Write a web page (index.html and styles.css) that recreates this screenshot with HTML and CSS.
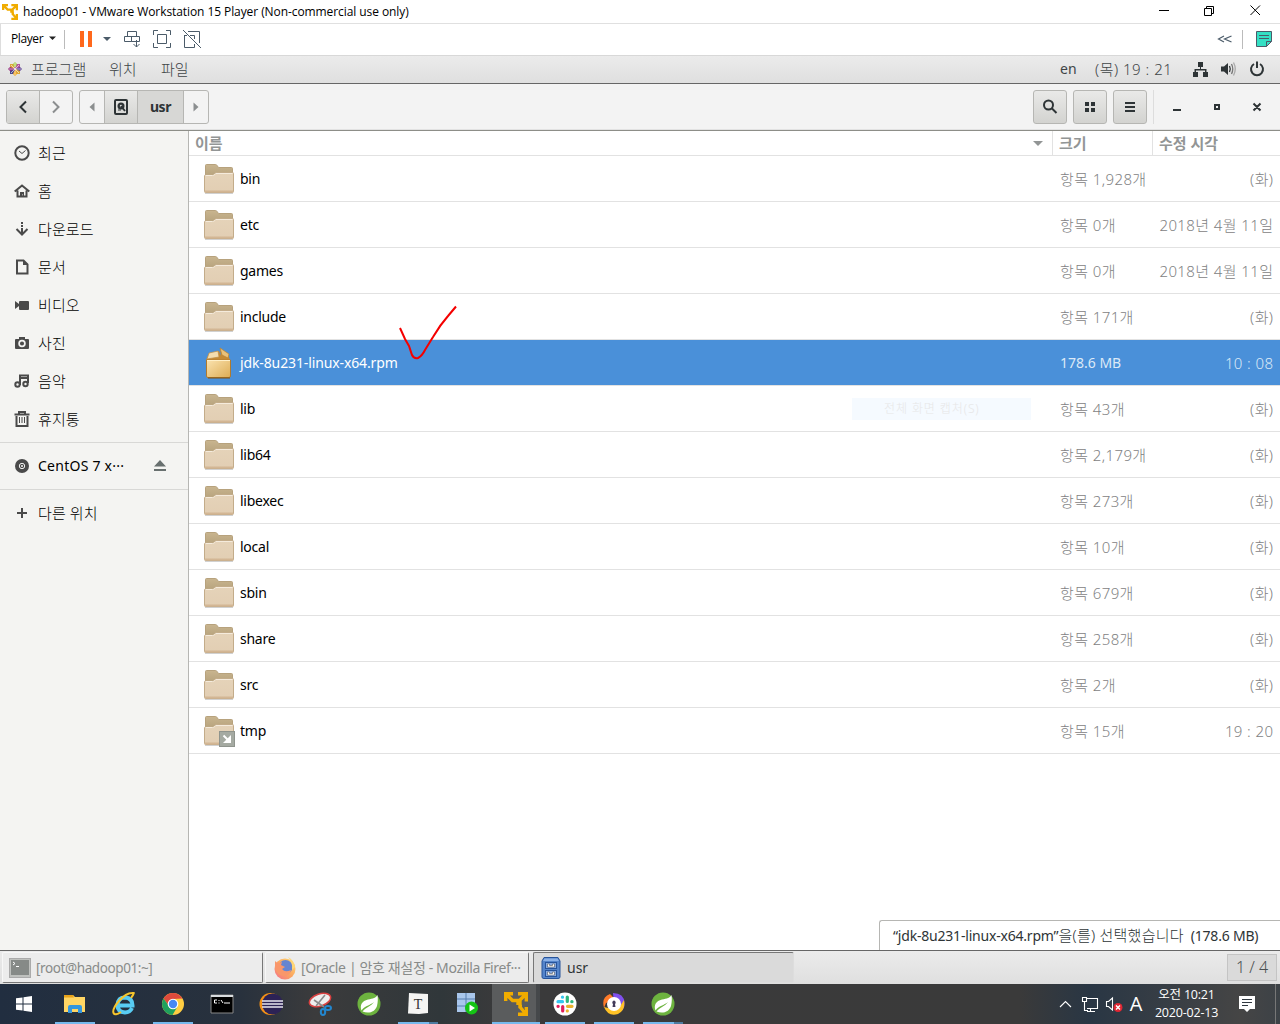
FILE: index.html
```html
<!DOCTYPE html>
<html lang="ko">
<head>
<meta charset="utf-8">
<title>hadoop01 - VMware Workstation 15 Player</title>
<link rel="stylesheet" href="styles.css">
</head>
<body>
<svg class="defs" aria-hidden="true">
  <defs>
    <linearGradient id="gBack" x1="0" y1="0" x2="0" y2="1"><stop offset="0" stop-color="#c9b58f"/><stop offset="1" stop-color="#b5a17c"/></linearGradient>
    <linearGradient id="gFront" x1="0" y1="0" x2="0" y2="1"><stop offset="0" stop-color="#e5d3b9"/><stop offset="1" stop-color="#e2ceb3"/></linearGradient>
    <linearGradient id="gBox" x1="0" y1="0" x2="1" y2="1"><stop offset="0" stop-color="#fbe3b0"/><stop offset="1" stop-color="#ddac54"/></linearGradient>
    <linearGradient id="gFox" x1="1" y1="0" x2="0" y2="1"><stop offset="0" stop-color="#ffe27a"/><stop offset=".5" stop-color="#fba65f"/><stop offset="1" stop-color="#f4708d"/></linearGradient>
    <symbol id="folder" viewBox="0 0 32 32">
      <path d="M2 30.500H30" stroke="#000" stroke-opacity=".18"/>
      <path d="M2.500 12V2.500q0-1 1-1h9q1 0 1.600 1l1.400 2h13q1 0 1 1V14z" fill="url(#gBack)" stroke="#b7a27d"/>
      <path d="M1.500 13q0-1 1-1H9.500q1 0 1.800-1l1-1q.8-.5 1.500-.5h15.700q1 0 1 1V28.500q0 1-1 1h-27q-1 0-1-1z" fill="url(#gFront)" stroke="#c3ac8a"/>
      <path d="M2.500 12.500H9.500q1.500 0 2.300-1l1-1H29.500" fill="none" stroke="#f5ebdc"/>
      <path d="M2 28.500H30" stroke="#d3b694" stroke-width="2"/>
    </symbol>
    <symbol id="spring" viewBox="0 0 24 24"><circle cx="12" cy="12" r="11.500" fill="#6db33f"/><path d="M20.500 3C19 6 16 6.500 11 7.500 5 9 2.500 13 4.500 18.500 8 13.500 13 13.500 17 10c-3 4.500-8 5-11.500 9.500C12 22 18 20 20 14c1-4 1-8 .5-11z" fill="#fff"/></symbol>
    <symbol id="vm" viewBox="0 0 24 24"><path d="M1.700 9V1.700H9M1.700 1.700L8.500 8.500H15.500L22.300 1.700M14 1.700H22.300V9.500M16 9V14.500H18M14 9V13M16 15L22.300 22.300M22.300 15V22.300H14" fill="none" stroke="#f0ac00" stroke-width="3.400"/></symbol>
  </defs>
</svg>

<header class="titlebar">
  <svg class="vmlogo"><use href="#vm"/></svg>
  <span class="win-title">hadoop01 - VMware Workstation 15 Player (Non-commercial use only)</span>
  <svg class="winbtns" viewBox="0 0 110 20" fill="none" stroke="#000"><path d="M4 8.500H14M49.500 6.500H56.500V13.500H49.500ZM51.500 6V4.500H58.500V11.500H57M95.500 3.500L105 13M105 3.500L95.500 13"/></svg>
</header>

<div class="toolbar">
  <span class="player">Player</span>
  <svg class="tools" viewBox="0 0 160 30" fill="none" stroke="#4b5b69">
    <path d="M1 11.500H8L4.500 15Z" fill="#222" stroke="none"/><path d="M16.500 5V24" stroke="#bbb"/>
    <path d="M32 6H36V22H32ZM40 6H44V22H40Z" fill="#ff681c" stroke="none"/><path d="M55 12H63L59 16Z" fill="#4b5b69" stroke="none"/>
    <path d="M79.500 6.500H88.500V11.500H79.500ZM76.500 11.500H83.500V16.500H76.500ZM83.500 11.500H91.500V16.500H83.500ZM88.500 15V22M85.500 19L88.500 22L91.500 19"/>
    <path d="M105.500 10V5.500H110M118 5.500H122.500V10M122.500 18V22.500H118M110 22.500H105.500V18M109.500 9.500H118.500V18.500H109.500Z"/>
    <path d="M135 5L153 23M136.500 10V22.500H146.500V19M140 6.500H151.500V18M136.500 10.500H139M142 10.500H146.500V14"/>
  </svg>
  <svg class="tools-right" viewBox="0 0 70 30" fill="none" stroke="#4b5b69"><path d="M14 11L8.500 14L14 17M21.500 11L14.500 14L21.500 17" stroke-width="1.200"/><path d="M32.500 5V24" stroke="#bbb"/><path d="M46.500 6.500H61.500V16.500L56.500 21.500H46.500Z" fill="#34e0c4"/><path d="M49 10.500H59M49 13.500H59M56.500 21.500V16.500H61.500"/></svg>
</div>

<nav class="gnome">
  <svg class="centos" viewBox="0 0 14 14"><path d="M7 0L9 2V7H5V2Z" fill="#a9d04a"/><path d="M14 7L12 9H7V5H12Z" fill="#5c3f91"/><path d="M7 14L5 12V7H9V12Z" fill="#efa724"/><path d="M0 7L2 5H7V9H2Z" fill="#932279"/><path d="M2 2H5L7 7L2 5ZM12 12H9L7 7L12 9Z" fill="#dba73b"/><path d="M12 2V5L7 7L9 2Z" fill="#b554a0"/><path d="M2 12V9L7 7L5 12Z" fill="#4c4a8c"/><path d="M7 1V13M1 7H13M3 3L11 11M11 3L3 11" stroke="#fff" stroke-width=".6"/></svg>
  <span class="g1">프로그램</span><span class="g2">위치</span><span class="g3">파일</span>
  <span class="lang">en</span><span class="clock">(목) 19 : 21</span>
  <svg class="tray" viewBox="0 0 76 20" fill="#2e3436"><path d="M6 3H11V8H6ZM1 13H6V18H1ZM11 13H16V18H11ZM8 7H9V10H14.500V14H13V11.500H4V14H2.500V10H8Z"/><path d="M29 7.500H32L36 4V16L32 12.500H29Z"/><g fill="none" stroke="#2e3436" stroke-width="1.300"><path d="M37.500 7Q39 10 37.500 13"/><path d="M39.500 5Q42 10 39.500 15" stroke="#777"/><path d="M41.500 3.500Q45 10 41.500 16.500" stroke="#aaa"/><path d="M62 5A6 6 0 1 0 68 5M65 2.500V9" stroke-width="2"/></g></svg>
</nav>

<div class="headbar">
  <div class="group nav-group">
    <span class="btn raised w33"><svg viewBox="0 0 16 16"><path d="M11 2.500L5.500 8L11 13.500" class="ln dark"/></svg></span>
    <span class="btn w32"><svg viewBox="0 0 16 16"><path d="M5 2.500L10.500 8L5 13.500" class="ln mid"/></svg></span>
  </div>
  <div class="group path-group">
    <span class="btn w24"><svg viewBox="0 0 16 16"><path d="M10.500 3.500V12.500L5.500 8Z" fill="#8b8e8f"/></svg></span>
    <span class="btn raised w34"><svg viewBox="0 0 16 16"><rect x="2" y="1" width="12" height="14" rx="1" fill="none" stroke="#2e3436" stroke-width="2"/><circle cx="8" cy="7" r="3.500" fill="#2e3436"/><circle cx="8" cy="7" r="1.200" fill="#ddd"/><path d="M8 7L12 12" stroke="#2e3436" stroke-width="2"/><path d="M5 11H8" stroke="#2e3436"/></svg></span>
    <span class="btn current">usr</span>
    <span class="btn w25"><svg viewBox="0 0 16 16"><path d="M5.500 3.500V12.500L10.500 8Z" fill="#8b8e8f"/></svg></span>
  </div>
  <div class="actions">
    <span class="btn raised solo"><svg viewBox="0 0 16 16"><circle cx="6.500" cy="6" r="4.500" class="ln dark"/><path d="M9.500 9L14.500 14" class="ln dark"/></svg></span>
    <span class="btn raised solo"><svg viewBox="0 0 16 16" fill="#2e3436"><path d="M3 3H7V7H3ZM9 3H13V7H9ZM3 9H7V13H3ZM9 9H13V13H9Z"/></svg></span>
    <span class="btn raised solo"><svg viewBox="0 0 16 16" fill="#2e3436"><path d="M3 3H13V5H3ZM3 7H13V9H3ZM3 11H13V13H3Z"/></svg></span>
  </div>
  <svg class="wincontrols" viewBox="0 0 127 34" fill="none" stroke="#2e3436" stroke-width="2"><path d="M.5 0V34" stroke="#ddd" stroke-width="1"/><path d="M20 20H28M62 15H66V19H62ZM100.500 13.500L107.500 20.500M107.500 13.500L100.500 20.500"/></svg>
</div>

<main class="body">
  <aside class="sidebar">
    <div class="place"><svg viewBox="0 0 16 16"><circle cx="8" cy="8" r="6.700" class="s2"/><path d="M5 6L8 8.500L11.500 5.500" class="s1"/></svg>최근</div>
    <div class="place"><svg viewBox="0 0 16 16"><path d="M.7 8.500L8 2.500L15.300 8.500M3.500 7.500V13.500H12.500V7.500" class="s2"/><path d="M6 14V9H10V14H8.500V11H8V14Z" fill="#4a4a4a"/></svg>홈</div>
    <div class="place"><svg viewBox="0 0 16 16"><path d="M8 1V3M8 4V6M8 7V13M2.500 8L8 13.500L13.500 8" class="s2"/></svg>다운로드</div>
    <div class="place"><svg viewBox="0 0 16 16"><path d="M3 1.500H9.500L13.500 5.500V14.500H3Z" class="s2"/><path d="M9 1V6H14" fill="#4a4a4a"/></svg>문서</div>
    <div class="place"><svg viewBox="0 0 16 16" fill="#4a4a4a"><path d="M1 4L5 7V9L1 12Z"/><rect x="5" y="4" width="10" height="9" rx="1"/></svg>비디오</div>
    <div class="place"><svg viewBox="0 0 16 16" fill="#4a4a4a"><path d="M2 4H5V2H11V4H14Q15 4 15 5V13Q15 14 14 14H2Q1 14 1 13V5Q1 4 2 4Z"/><circle cx="8" cy="8.500" r="2.900" fill="none" stroke="#f3f3f2" stroke-width="1.700"/></svg>사진</div>
    <div class="place"><svg viewBox="0 0 16 16"><path d="M6 12V2.500H14V10M6 5H14" class="s2"/><circle cx="3.500" cy="11.500" r="2.200" class="s2"/><circle cx="11.500" cy="11" r="2.200" class="s2"/></svg>음악</div>
    <div class="place"><svg viewBox="0 0 16 16"><path d="M.5 3.500H15.500M5 3V1H11V3M2.500 5V15H13.500V5" class="s2"/><path d="M5.500 6V12M8 6V12M10.500 6V12" class="s1"/></svg>휴지통</div>
    <div class="place device"><svg viewBox="0 0 16 16"><circle cx="8" cy="8" r="7" fill="#4a4a4a"/><circle cx="8" cy="8" r="2.700" fill="none" stroke="#f3f3f2"/><circle cx="8" cy="8" r="1" fill="#f3f3f2"/></svg><span class="devname">CentOS 7 x···</span><svg class="eject" viewBox="0 0 16 16"><path d="M8 2L14 8.500H2ZM2 11H14V13H2Z" fill="#68706f"/></svg></div>
    <div class="place other"><svg viewBox="0 0 16 16"><path d="M8 3V13M3 8H13" class="s2"/></svg>다른 위치</div>
  </aside>

  <section class="files">
    <div class="row cols"><span class="cname">이름<i class="sort"></i></span><span class="csize">크기</span><span class="cdate">수정 시각</span></div>
    <div class="row"><svg class="ficon"><use href="#folder"/></svg><span class="name">bin</span><span class="size">항목 1,928개</span><span class="date">(화)</span></div>
    <div class="row"><svg class="ficon"><use href="#folder"/></svg><span class="name">etc</span><span class="size">항목 0개</span><span class="date">2018년 4월 11일</span></div>
    <div class="row"><svg class="ficon"><use href="#folder"/></svg><span class="name">games</span><span class="size">항목 0개</span><span class="date">2018년 4월 11일</span></div>
    <div class="row"><svg class="ficon"><use href="#folder"/></svg><span class="name">include</span><span class="size">항목 171개</span><span class="date">(화)</span></div>
    <div class="row selected">
      <svg class="ficon" viewBox="0 0 32 32"><path d="M3 13L6 7 16 4 18 9 17 1 25 7 27 13Z" fill="#c58a34"/><path d="M6 6L15 4 16 10 4 12Z" fill="#f3dcae" stroke="#c08c42" stroke-width=".7"/><path d="M17 1L26 7 25 11 19 8Z" fill="#e9c17a" stroke="#b98434" stroke-width=".7"/><path d="M3.500 13H27.500V29Q27.500 30.500 26 30.500H5Q3.500 30.500 3.500 29Z" fill="url(#gBox)" stroke="#b07a2c"/><path d="M4 13.500H27" stroke="#fff0c9"/><path d="M5 31H27" stroke="#805312"/></svg>
      <span class="name">jdk-8u231-linux-x64.rpm</span><span class="size">178.6 MB</span><span class="date">10 : 08</span>
      <svg class="check" viewBox="0 0 60 56"><path d="M2 23L7 34L11 41L14 50Q16 54 20 53Q24 51 27 45L35 32Q42 20 50 11L58 1.500" fill="none" stroke="#f40000" stroke-width="2"/></svg>
    </div>
    <div class="row"><svg class="ficon"><use href="#folder"/></svg><span class="name">lib</span><span class="size">항목 43개</span><span class="date">(화)</span><span class="ghost">전체 화면 캡처(S)</span></div>
    <div class="row"><svg class="ficon"><use href="#folder"/></svg><span class="name">lib64</span><span class="size">항목 2,179개</span><span class="date">(화)</span></div>
    <div class="row"><svg class="ficon"><use href="#folder"/></svg><span class="name">libexec</span><span class="size">항목 273개</span><span class="date">(화)</span></div>
    <div class="row"><svg class="ficon"><use href="#folder"/></svg><span class="name">local</span><span class="size">항목 10개</span><span class="date">(화)</span></div>
    <div class="row"><svg class="ficon"><use href="#folder"/></svg><span class="name">sbin</span><span class="size">항목 679개</span><span class="date">(화)</span></div>
    <div class="row"><svg class="ficon"><use href="#folder"/></svg><span class="name">share</span><span class="size">항목 258개</span><span class="date">(화)</span></div>
    <div class="row"><svg class="ficon"><use href="#folder"/></svg><span class="name">src</span><span class="size">항목 2개</span><span class="date">(화)</span></div>
    <div class="row"><svg class="ficon" viewBox="0 0 32 32"><use href="#folder"/><rect x="16.500" y="16.500" width="15" height="15" fill="#a5aaa2" stroke="#8f948d"/><path d="M20.500 20.500L25 25" fill="none" stroke="#fff" stroke-width="2"/><path d="M28 20V28H20Z" fill="#fff"/></svg><span class="name">tmp</span><span class="size">항목 15개</span><span class="date">19 : 20</span></div>
    <div class="status">“jdk-8u231-linux-x64.rpm”<span class="ko">을(를) 선택했습니다</span>&nbsp; (178.6 MB)</div>
  </section>
</main>

<div class="panel">
  <div class="task t1"><svg viewBox="0 0 24 24"><rect x="1.500" y="2.500" width="21" height="19" fill="#bfc1be" stroke="#aaa"/><rect x="3" y="4" width="18" height="15" fill="#868a87"/><path d="M5 6L7 7.500L5 9M8 10.500H11" stroke="#fff" fill="none"/></svg><span>[root@hadoop01:~]</span></div>
  <div class="task t2"><svg viewBox="0 0 24 24"><circle cx="12" cy="13" r="10.500" fill="url(#gFox)"/><circle cx="12.500" cy="11" r="7" fill="#6585d1"/><path d="M2 5Q4 8 9 6L8 9 12 11 9 13Q12 17 18 14 17 20 11 20 3 19 2 12Z" fill="#f9976b"/><path d="M15 1Q21 4 22 11L19 14Q20 6 15 1Z" fill="#ffd777"/></svg><span>[Oracle | 암호 재설정 - Mozilla Firef···</span></div>
  <div class="task t3"><svg viewBox="0 0 24 24"><path d="M5 1.500H19L21 5V21Q21 22.500 19 22.500H5Q3 22.500 3 21V5Z" fill="#5484ca" stroke="#28549a"/><path d="M5.500 2.500H18.500L20 5H4Z" fill="#8bb1e7"/><rect x="6.500" y="6.500" width="11" height="6" fill="#86a9df" stroke="#27549b"/><rect x="6.500" y="14.500" width="11" height="6" fill="#86a9df" stroke="#27549b"/><path d="M8.500 8H10.500V9.500H13.500V8H15.500V11H8.500ZM8.500 16H10.500V17.500H13.500V16H15.500V19H8.500Z" fill="#fff" stroke="#444" stroke-width=".5"/></svg><span>usr</span></div>
  <div class="pager">1 / 4</div>
</div>

<footer class="taskbar">
  <span class="start"><svg viewBox="0 0 16 16" fill="#fff"><path d="M0 2.300L6.500 1.400V7.500H0ZM7.500 1.200L16 0V7.500H7.500ZM0 8.500H6.500V14.600L0 13.700ZM7.500 8.500H16V16L7.500 14.800Z"/></svg></span>
  <span class="app on"><svg viewBox="0 0 24 24"><path d="M1 3H10L12 5H22V20H1Z" fill="#ffd564"/><path d="M1 3H10L11 5.500H1Z" fill="#e7a21a"/><path d="M5 21V15Q5 13 7 13H17Q19 13 19 15V21H15V17H9V21Z" fill="#3296df"/></svg></span>
  <span class="app"><svg viewBox="0 0 24 24"><path d="M20 16Q18 20.500 13 20.500 5.500 20 5.500 13 6 5.500 13 5.500 20.500 6 20.500 13.500H7" fill="none" stroke="#58ccf3" stroke-width="4"/><path d="M19 6Q24-1 20 1 14 1 7 9 0 17 1.500 21 3 24 9 20" fill="none" stroke="#f7c52c" stroke-width="2"/></svg></span>
  <span class="app on"><svg viewBox="0 0 24 24"><circle cx="12" cy="12" r="11" fill="#ffcd42"/><path d="M2.500 6.500A11 11 0 0 1 21.500 6.500L12 7 8 14Z" fill="#de4a3c"/><path d="M2.500 6.500A11 11 0 0 0 11.500 23L16.500 14.500 8 14Z" fill="#1fa15d"/><circle cx="12" cy="12" r="5.300" fill="#fff"/><circle cx="12" cy="12" r="4.200" fill="#4688f4"/></svg></span>
  <span class="app"><svg viewBox="0 0 24 24"><path d="M1 3H23V21H1Z" fill="#000" stroke="#888"/><path d="M1 3H23V5H1Z" fill="#d8dcdf"/><path d="M7 8H4.500V11H7M9 8V9M9 10.500V11.500M11 8L13 11M14 11H20" stroke="#fff" fill="none"/></svg></span>
  <span class="app"><svg viewBox="0 0 24 24"><circle cx="11.500" cy="12" r="11" fill="#f49116"/><circle cx="13.500" cy="12" r="10.500" fill="#2c2255"/><path d="M3 9H24M3 12H24M3 15H24" stroke="#e8e6f0" stroke-width="1.600"/></svg></span>
  <span class="app"><svg viewBox="0 0 24 24"><ellipse cx="12" cy="8" rx="11" ry="6" fill="#eee" stroke="#d94141" stroke-width="1.500" transform="rotate(-18 12 8)"/><path d="M8 14L17 3M6 8L16 15" stroke="#8b8b8b" stroke-width="1.600"/><ellipse cx="15" cy="20" rx="2.200" ry="3" fill="none" stroke="#2286cf" stroke-width="2"/><ellipse cx="20" cy="16" rx="3" ry="2" fill="none" stroke="#2286cf" stroke-width="2"/></svg></span>
  <span class="app"><svg><use href="#spring"/></svg></span>
  <span class="app on multi"><svg viewBox="0 0 24 24"><path d="M3 1L22 2 22 21 13 22 2 21.500Z" fill="#f5f5f3"/><text x="12" y="17" text-anchor="middle" class="typora">T</text></svg></span>
  <span class="app"><svg viewBox="0 0 24 24"><path d="M2 1H20V20H2Z" fill="#a9c7ec"/><path d="M2 7H20M2 14H20M11 1V20" stroke="#567fae"/><circle cx="16.500" cy="16" r="6.500" fill="#14c414"/><path d="M14.500 12.500V19.500L20 16Z" fill="#fff"/></svg></span>
  <span class="app on active"><svg><use href="#vm"/></svg></span>
  <span class="app on"><svg viewBox="0 0 24 24"><circle cx="12" cy="12" r="11.500" fill="#fff"/><g stroke-width="3.200" stroke-linecap="round"><path d="M5 9.700H9.500M9.500 5V5.200" stroke="#36c5f0"/><path d="M14.300 5V9.500M18.800 9.700H19" stroke="#2eb67d"/><path d="M14.500 14.300H19M14.300 18.800V19" stroke="#ecb22e"/><path d="M9.700 14.500V19M5 14.300H5.200" stroke="#e01e5a"/></g></svg></span>
  <span class="app on"><svg viewBox="0 0 24 24"><path d="M11 1Q22 1 22.500 11 23 17 18 20L12 12Z" fill="#8050ef"/><path d="M2 16Q-1 5 8 2L14 8 4 11Z" fill="#ff7b29"/><path d="M2 15Q6 25 16 22 24 18 22 8L17 16 6 16Z" fill="#ffc226"/><circle cx="12" cy="12" r="7" fill="#fff"/><path d="M12 8.500A2 2 0 0 1 13 12L13.500 15H10.500L11 12A2 2 0 0 1 12 8.500Z" fill="#433b59"/></svg></span>
  <span class="app on multi"><svg><use href="#spring"/></svg></span>
  <svg class="systray" viewBox="0 0 66 24" fill="none" stroke="#fff" stroke-width="1.100"><path d="M1 15L6.500 9.500L12 15"/><path d="M27 6.500H38.500V16.500H28M31.500 16.500V19.500M28 19.500H36M23.500 5.500H27.500V9.500H23.500ZM25.500 9.500V18.500H29"/><path d="M47.500 9.500H49.500L53.500 6V18L49.500 14.500H47.500Z"/><circle cx="59" cy="15.500" r="4.500" fill="#e12733" stroke="none"/><path d="M57 13.500L61 17.500M61 13.500L57 17.500" stroke-width="1.400"/></svg>
  <span class="ime">A</span>
  <span class="wclock"><span>오전 10:21</span><span>2020-02-13</span></span>
  <svg class="note" viewBox="0 0 16 16"><path d="M0 0H16V13H11L8 16 5 13H0Z" fill="#fff"/><path d="M3 3.500H13M3 6.500H13M3 9.500H9" stroke="#303840"/></svg>
  <span class="desk"></span>
</footer>
</body>
</html>
```
FILE: styles.css
```css
* { box-sizing: border-box; }
body { margin: 0; width: 1280px; height: 1024px; overflow: hidden; display: flex; flex-direction: column; background: #fff; font: 14px/20px "Noto Sans", "Noto Sans CJK KR", sans-serif; color: #000; white-space: nowrap; }
svg { display: block; flex: none; }
.defs { position: absolute; width: 0; height: 0; }

.titlebar { height: 24px; flex: none; display: flex; align-items: center; border-bottom: 1px solid #e0e0e0; padding-left: 2px; }
.vmlogo { width: 16px; height: 16px; }
.win-title { margin-left: 5px; font: 12px/20px "Open Sans", sans-serif; letter-spacing: -.08px; }
.winbtns { width: 110px; height: 20px; margin-left: auto; margin-right: 15px; }

.toolbar { height: 31px; flex: none; display: flex; align-items: center; border-left: 1px solid #ddd; padding-left: 10px; }
.player { width: 37px; font: 12px/18px "Open Sans", sans-serif; height: 20px; letter-spacing: -.4px; }
.tools { width: 160px; height: 30px; }
.tools-right { width: 70px; height: 30px; margin-left: auto; }

.gnome { height: 29px; flex: none; display: flex; align-items: center; border-top: 1px solid #d8d8d8; border-bottom: 1px solid #666; background: linear-gradient(#ebebeb, #dfdfdf); color: #3f4547; font-weight: 300; font-size: 15px; padding: 0 0 1px 8px; }
.centos { width: 14px; height: 14px; margin-right: 9px; }
.g1 { width: 78px; }
.g2 { width: 52px; }
.lang { margin-left: auto; width: 35px; font-size: 14px; font-weight: 400; }
.clock { width: 97px; letter-spacing: .5px; }
.tray { width: 76px; height: 20px; margin-right: 12px; }

.headbar { height: 47px; flex: none; display: flex; align-items: center; padding-left: 6px; background: #f3f3f3; border-bottom: 1px solid #8d8e88; box-shadow: inset 0 -1px #e2e2e2; }
.group { display: flex; height: 34px; border: 1px solid #b6b6b3; border-radius: 3px; overflow: hidden; }
.path-group { margin-left: 6px; }
.btn { display: flex; align-items: center; justify-content: center; }
.btn svg { width: 16px; height: 16px; }
.group .btn + .btn { border-left: 1px solid #b6b6b3; }
.w33 { width: 32px; }
.w32 { width: 33px; }
.w24 { width: 24px; }
.w25 { width: 25px; }
.w34 { width: 33px; }
.raised { background: linear-gradient(#e9e9e8, #d3d3d0); }
.current { width: 46px; background: #d7d7d5; font-weight: 700; color: #2e3436; letter-spacing: -.4px; }
.ln { fill: none; stroke-width: 2; }
.dark { stroke: #2e3436; }
.mid { stroke: #8b8e8f; }
.actions { display: flex; gap: 6px; margin-left: auto; }
.solo { width: 34px; height: 34px; border: 1px solid #b6b6b3; border-radius: 3px; }
.wincontrols { width: 127px; height: 34px; margin-left: 6px; }

.body { height: 819px; flex: none; display: flex; }
.sidebar { width: 189px; background: #f4f4f2; border-right: 1px solid #b6b6b3; padding-top: 3px; }
.place { height: 38px; display: flex; align-items: center; gap: 8px; padding-left: 14px; font-size: 15px; font-weight: 300; letter-spacing: .1px; }
.place svg { width: 16px; height: 16px; }
.s1, .s2 { fill: none; stroke: #4a4a4a; }
.s2 { stroke-width: 2; }
.device { height: 48px; margin-top: 4px; border: solid #d8d8d6; border-width: 1px 0; font-size: 14px; font-weight: 400; }
.devname { width: 106px; letter-spacing: .25px; }
.other { height: 45px; }

.files { flex: 1; display: flex; flex-direction: column; }
.row { height: 46px; flex: none; display: flex; align-items: center; border-bottom: 1px solid #e2e2e2; position: relative; }
.cols { height: 25px; font-size: 15px; font-weight: 700; color: #929595; }
.cname { width: 864px; height: 24px; display: flex; justify-content: space-between; align-items: center; padding: 0 9px 0 6px; border-right: 1px solid #e2e2e2; }
.csize { width: 100px; height: 24px; line-height: 24px; border-right: 1px solid #e2e2e2; padding-left: 6px; }
.cdate { padding-left: 6px; }
.sort { border: 5px solid transparent; border-top-color: #929595; border-bottom: 0; }
.ficon { width: 32px; height: 32px; margin-left: 14px; }
.name { width: 820px; margin-left: 5px; letter-spacing: -.25px; }
.size, .date { color: #7f8283; font-size: 15px; font-weight: 300; letter-spacing: .4px; }
.date { margin-left: auto; margin-right: 6.6px; }
.selected { background: #4a90d9; background-clip: padding-box; color: #fff; }
.selected .name { letter-spacing: -.12px; }
.selected .size, .selected .date { color: #dce9f7; }
.selected .size { font-size: 14px; font-weight: 400; letter-spacing: 0; }
.check { position: absolute; left: 209px; top: -35px; width: 60px; height: 56px; }
.ghost { position: absolute; left: 663px; top: 12px; width: 179px; height: 22px; padding-left: 32px; background: #f5faff; color: #e7e7e7; font-size: 12px; font-weight: 300; line-height: 21px; letter-spacing: .9px; }
.status { width: 401px; height: 30px; margin-top: auto; margin-left: auto; border: 1px solid #b6b6b3; border-width: 1px 0 0 1px; border-radius: 3px 0 0 0; padding-left: 13px; line-height: 28px; color: #2e3436; letter-spacing: -.2px; }
.ko { font-size: 15px; font-weight: 300; letter-spacing: .25px; }

.panel { height: 34px; flex: none; display: flex; align-items: center; border-top: 1px solid #666; background: linear-gradient(#ebebeb, #dfdfdf); padding: 0 3px 0 2px; }
.task { height: 31px; display: flex; align-items: center; gap: 4px; border: 1px solid #f7f7f7; border-right-color: #777; border-bottom-color: #777; border-radius: 2px; padding-left: 5px; color: #888b89; background: #ececec; }
.task svg { width: 24px; height: 24px; }
.t1 { width: 261px; }
.t1 span { font-size: 13.5px; letter-spacing: -.4px; }
.t2 { width: 264px; margin-left: 2px; padding-left: 7px; }
.t2 span { letter-spacing: -.36px; }
.t3 { width: 261px; margin-left: 4px; background: #dadada; border-color: #777 #ddd #ddd #777; color: #2e3436; }
.pager { width: 50px; height: 27px; margin-left: auto; border: 1px solid #c4c4c4; background: #dadada; color: #4a4f50; text-align: center; font-size: 16px; font-weight: 300; line-height: 25px; }

.taskbar { height: 40px; flex: none; display: flex; align-items: center; background: linear-gradient(90deg, #212e40 0, #28313d 240px, #3b3b3c 315px, #30373a 440px, #3a3a3b 500px, #3a3a3a 1020px, #293644 1090px, #454545 1240px, #3d4247); color: #fff; }
.start { width: 50px; padding-left: 16px; }
.start svg { width: 16px; height: 16px; }
.app { width: 49px; height: 40px; display: flex; align-items: center; justify-content: center; }
.app svg { width: 24px; height: 24px; }
.on { background: linear-gradient(#76b9ed, #76b9ed) 5px 38px / 40px 2px no-repeat; }
.multi { background: linear-gradient(90deg, #76b9ed 31px, #4d7ba0 31px) 5px 38px / 40px 2px no-repeat; }
.active { background: linear-gradient(#76b9ed, #76b9ed) 1px 38px / 48px 2px no-repeat, linear-gradient(90deg, transparent 1px, #5a5c5d 1px 45px, #45484a 45px); }
.typora { font: 14px "Liberation Serif", serif; fill: #333; }
.systray { width: 66px; height: 24px; margin-left: auto; }
.ime { width: 22px; text-align: center; font: 20px/24px "Open Sans", sans-serif; }
.wclock { width: 79px; display: flex; flex-direction: column; align-items: center; font: 12.500px/18px "Open Sans", "Noto Sans CJK KR", sans-serif; letter-spacing: -.2px; }
.note { width: 16px; height: 16px; margin-left: 13px; }
.desk { width: 1px; height: 40px; margin-left: 20px; margin-right: 4px; background: #777; }
```
